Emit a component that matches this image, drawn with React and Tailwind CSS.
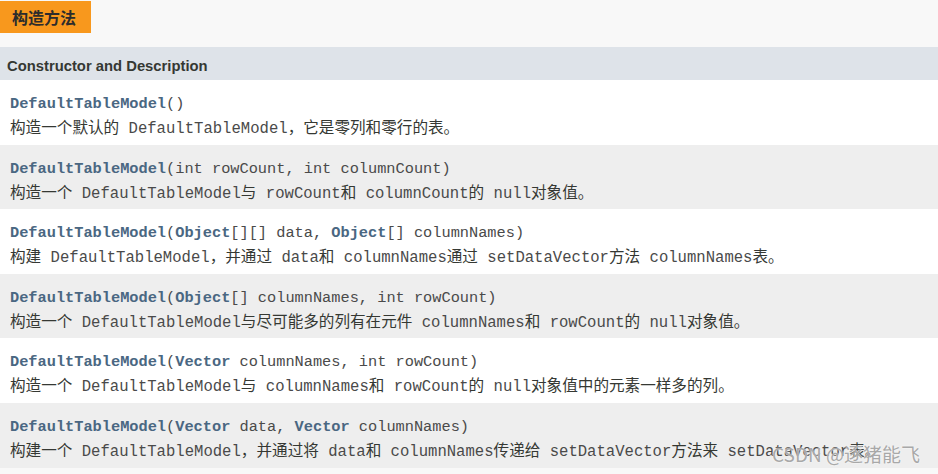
const mono = "font-['Liberation_Mono','Courier_New',monospace]";

const C = ({ children }) => <span className={`${mono} text-[#4a4a4a]`}>{children}</span>;
const B = ({ children }) => <span className="font-bold text-[#4a6782]">{children}</span>;

const rows = [
  {
    sig: <>()</>,
    desc: <>构造一个默认的<C> DefaultTableModel</C>，它是零列和零行的表。</>,
  },
  {
    sig: <>(int rowCount, int columnCount)</>,
    desc: <>构造一个<C> DefaultTableModel</C>与<C> rowCount</C>和<C> columnCount</C>的<C> null</C>对象值。</>,
  },
  {
    sig: <>(<B>Object</B>[][] data, <B>Object</B>[] columnNames)</>,
    desc: <>构建<C> DefaultTableModel</C>，并通过<C> data</C>和<C> columnNames</C>通过<C> setDataVector</C>方法<C> columnNames</C>表。</>,
  },
  {
    sig: <>(<B>Object</B>[] columnNames, int rowCount)</>,
    desc: <>构造一个<C> DefaultTableModel</C>与尽可能多的列有在元件<C> columnNames</C>和<C> rowCount</C>的<C> null</C>对象值。</>,
  },
  {
    sig: <>(<B>Vector</B> columnNames, int rowCount)</>,
    desc: <>构造一个<C> DefaultTableModel</C>与<C> columnNames</C>和<C> rowCount</C>的<C> null</C>对象值中的元素一样多的列。</>,
  },
  {
    sig: <>(<B>Vector</B> data, <B>Vector</B> columnNames)</>,
    desc: <>构建一个<C> DefaultTableModel</C>，并通过将<C> data</C>和<C> columnNames</C>传递给<C> setDataVector</C>方法来<C> setDataVector</C>表。</>,
  },
];

const heights = ["h-[65px]", "h-[64px]", "h-[65px]", "h-[64px]", "h-[65px]", "h-[65px]"];

const App = () => {
  return (
    <div className="relative w-[938px] h-[474px] overflow-hidden bg-[#f8f8f8] font-['Liberation_Sans','Noto_Sans_CJK_SC',sans-serif]">
      <div className="h-[47px] pt-[1px]">
        <div className="w-[91px] h-[32px] bg-[#f8981d] flex items-center pl-[12px] text-[16px] font-bold text-[#2c2c2c] font-['Noto_Sans_CJK_SC',sans-serif]">
          构造方法
        </div>
      </div>
      <div className="h-[33px] bg-[#dee3e9] flex items-center pt-[6px] pl-[7px] text-[14.8px] font-bold text-[#353833]">
        Constructor and Description
      </div>
      {rows.map((r, i) => (
        <div key={i} className={`${heights[i]} ${i % 2 ? "bg-[#eeeeee]" : "bg-white"} pl-[10px] pt-[13px]`}>
          <div className={`${mono} h-[22px] leading-[22px] text-[15.3px] text-[#4a4a4a] whitespace-nowrap`}>
            <B>DefaultTableModel</B>{r.sig}
          </div>
          <div className="h-[22px] leading-[22px] text-[15.6px] text-[#353833] whitespace-nowrap font-['Noto_Sans_CJK_SC',sans-serif]">
            {r.desc}
          </div>
        </div>
      ))}
      <div className="absolute left-[772px] top-[440px] text-[19px] text-[#a8a8a8] whitespace-nowrap font-['Noto_Sans_CJK_SC',sans-serif] [text-shadow:0_0_2px_#fff]">
        CSDN @逐猪能飞
      </div>
    </div>
  );
};

export default App;
